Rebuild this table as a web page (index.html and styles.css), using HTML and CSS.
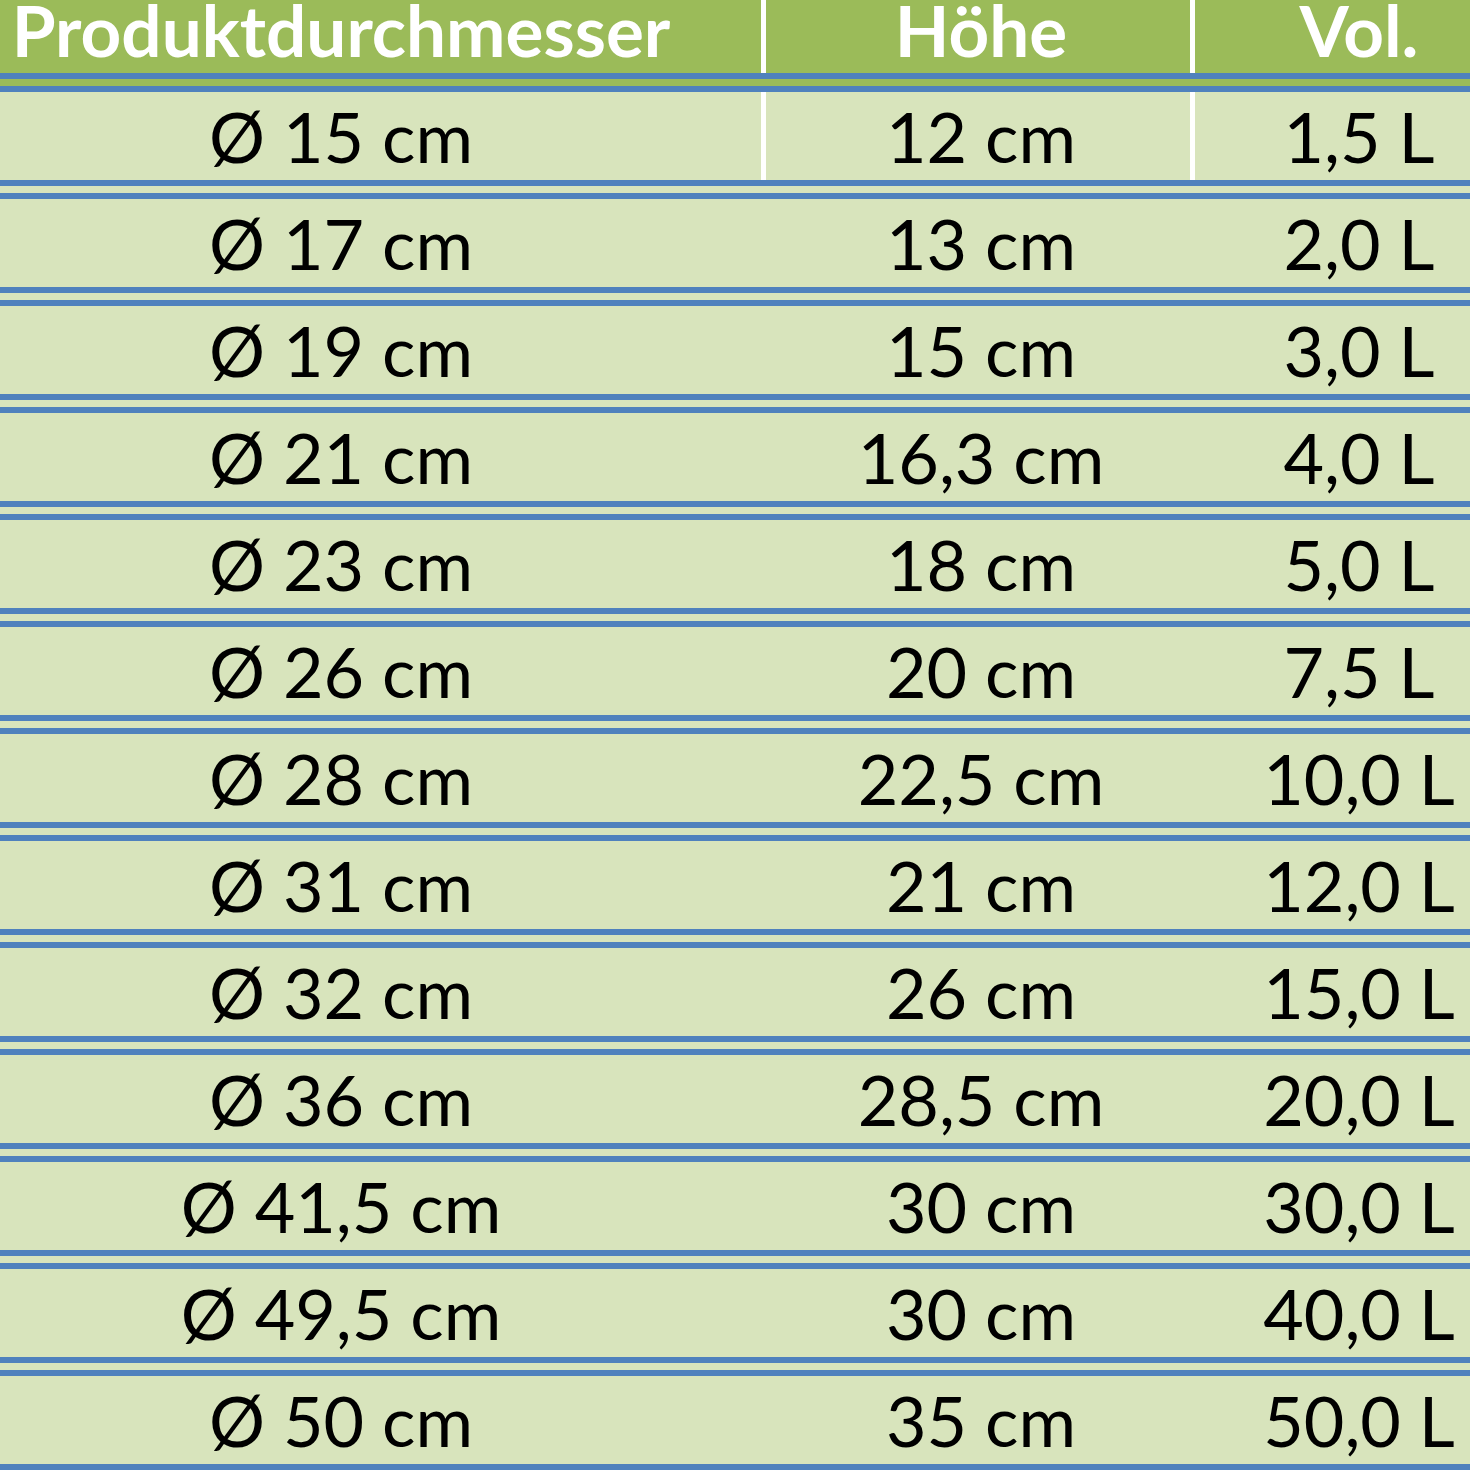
FILE: index.html
```html
<!DOCTYPE html>
<html lang="de">
<head>
<meta charset="utf-8">
<title>Produktmaße</title>
<link rel="stylesheet" href="styles.css">
</head>
<body>
<div class="table">
  <div class="row head divided">
    <div class="cell c1">Produktdurchmesser</div>
    <div class="cell c2">Höhe</div>
    <div class="cell c3">Vol.</div>
  </div>
  <div class="row divided">
    <div class="cell c1">Ø 15 cm</div>
    <div class="cell c2">12 cm</div>
    <div class="cell c3">1,5 L</div>
  </div>
  <div class="row">
    <div class="cell c1">Ø 17 cm</div>
    <div class="cell c2">13 cm</div>
    <div class="cell c3">2,0 L</div>
  </div>
  <div class="row">
    <div class="cell c1">Ø 19 cm</div>
    <div class="cell c2">15 cm</div>
    <div class="cell c3">3,0 L</div>
  </div>
  <div class="row">
    <div class="cell c1">Ø 21 cm</div>
    <div class="cell c2">16,3 cm</div>
    <div class="cell c3">4,0 L</div>
  </div>
  <div class="row">
    <div class="cell c1">Ø 23 cm</div>
    <div class="cell c2">18 cm</div>
    <div class="cell c3">5,0 L</div>
  </div>
  <div class="row">
    <div class="cell c1">Ø 26 cm</div>
    <div class="cell c2">20 cm</div>
    <div class="cell c3">7,5 L</div>
  </div>
  <div class="row">
    <div class="cell c1">Ø 28 cm</div>
    <div class="cell c2">22,5 cm</div>
    <div class="cell c3">10,0 L</div>
  </div>
  <div class="row">
    <div class="cell c1">Ø 31 cm</div>
    <div class="cell c2">21 cm</div>
    <div class="cell c3">12,0 L</div>
  </div>
  <div class="row">
    <div class="cell c1">Ø 32 cm</div>
    <div class="cell c2">26 cm</div>
    <div class="cell c3">15,0 L</div>
  </div>
  <div class="row">
    <div class="cell c1">Ø 36 cm</div>
    <div class="cell c2">28,5 cm</div>
    <div class="cell c3">20,0 L</div>
  </div>
  <div class="row">
    <div class="cell c1">Ø 41,5 cm</div>
    <div class="cell c2">30 cm</div>
    <div class="cell c3">30,0 L</div>
  </div>
  <div class="row">
    <div class="cell c1">Ø 49,5 cm</div>
    <div class="cell c2">30 cm</div>
    <div class="cell c3">40,0 L</div>
  </div>
  <div class="row">
    <div class="cell c1">Ø 50 cm</div>
    <div class="cell c2">35 cm</div>
    <div class="cell c3">50,0 L</div>
  </div>
</div>
</body>
</html>
```

FILE: styles.css
```css
html, body {
  margin: 0;
  padding: 0;
  overflow: hidden;
  background: #d8e4bc;
}

.table {
  width: 1470px;
  font-family: Lato, "Liberation Sans", sans-serif;
  color: #000;
}

.row {
  display: grid;
  grid-template-columns: 766px 429px 1fr;
  height: 107px;
  box-sizing: border-box;
  background: #d8e4bc;
  border-bottom: 19px double #4f81bd;
}

.cell {
  box-sizing: border-box;
  border-right: 5px solid transparent;
  text-align: center;
  white-space: nowrap;
  font-size: 70px;
  line-height: 88px;
  height: 88px;
}

.cell.c3 {
  border-right: 0;
}

.divided .cell.c1,
.divided .cell.c2 {
  border-right-color: #ffffff;
}

.c1 {
  padding-right: 79px;
}

.c2 {
  padding-left: 6px;
}

.c3 {
  padding-left: 53px;
}

.head {
  height: 92px;
  background: #9bbb59;
}

.head .cell {
  height: 73px;
  font-size: 71px;
  font-weight: 700;
  line-height: 59px;
  color: #ffffff;
}
```
